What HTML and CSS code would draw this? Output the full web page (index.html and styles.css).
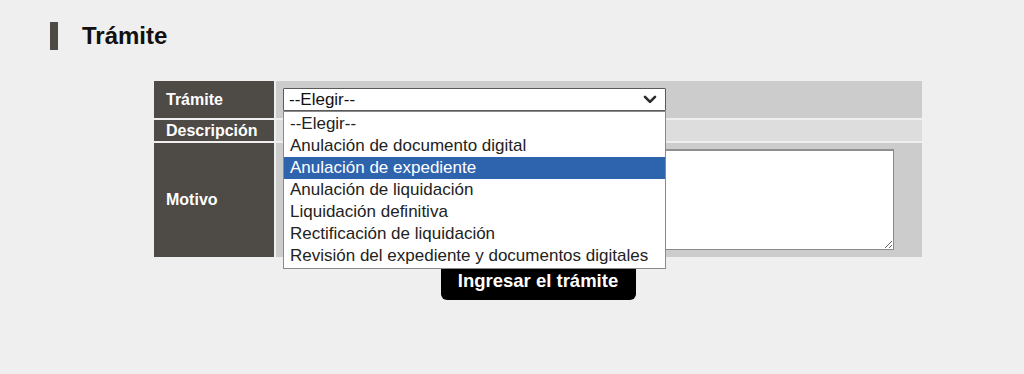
FILE: index.html
```html
<!DOCTYPE html>
<html lang="es">
<head>
<meta charset="utf-8">
<title>Trámite</title>
<link rel="stylesheet" href="styles.css">
</head>
<body>
<div class="page">
  <h1 class="title"><span class="bar"></span><span>Trámite</span></h1>
  <form class="form">
    <div class="grid">
      <div class="label">Trámite</div>
      <div class="value dark">
        <div class="select-wrap">
          <div class="select">
            <span>--Elegir--</span>
            <svg class="chev" width="14" height="9" viewBox="0 0 14 9"><path d="M2 1.8 L7 6.8 L12 1.8" fill="none" stroke="#2b2b2b" stroke-width="2.6" stroke-linecap="round" stroke-linejoin="round"/></svg>
          </div>
          <ul class="listbox">
            <li>--Elegir--</li>
            <li>Anulación de documento digital</li>
            <li class="sel">Anulación de expediente</li>
            <li>Anulación de liquidación</li>
            <li>Liquidación definitiva</li>
            <li>Rectificación de liquidación</li>
            <li>Revisión del expediente y documentos digitales</li>
          </ul>
        </div>
      </div>
      <div class="label">Descripción</div>
      <div class="value light"></div>
      <div class="label">Motivo</div>
      <div class="value dark motivo-cell">
        <textarea class="motivo"></textarea>
      </div>
    </div>
    <div class="actions">
      <button type="button" class="btn">Ingresar el trámite</button>
    </div>
  </form>
</div>
</body>
</html>
```

FILE: styles.css
```css
* { box-sizing: border-box; }
html, body {
  margin: 0;
  padding: 0;
  background: #efefef;
  font-family: "Liberation Sans", Arial, sans-serif;
}
.page {
  width: 1024px;
  height: 374px;
  padding: 22px 0 0 50px;
}
.title {
  margin: 0;
  display: flex;
  align-items: center;
  gap: 24px;
  height: 28px;
  font-size: 24px;
  font-weight: bold;
  color: #111;
}
.bar {
  display: block;
  width: 8px;
  height: 28px;
  background: #4e4a46;
}
.form {
  margin: 31px 0 0 104px;
  width: 768px;
}
.grid {
  display: grid;
  grid-template-columns: 120px 646px;
  grid-template-rows: 37px 21px 114px;
  gap: 2px;
}
.label {
  background: #4e4a46;
  color: #fff;
  font-weight: bold;
  font-size: 16px;
  display: flex;
  align-items: center;
  padding-left: 12px;
}
.value.dark { background: #cccccc; }
.value.light { background: #dddddd; }
.value {
  padding-left: 7px;
}
.select-wrap {
  position: relative;
  margin-top: 7px;
  width: 383px;
}
.select {
  height: 23px;
  background: #fff;
  border: 1px solid #5a5a5a;
  border-radius: 1px;
  display: flex;
  align-items: center;
  justify-content: space-between;
  padding: 0 8px 0 5px;
  font-size: 17px;
  color: #111;
}
.chev { display: block; }
.listbox {
  position: absolute;
  top: 23px;
  left: 0;
  width: 383px;
  margin: 0;
  padding: 1px 0;
  list-style: none;
  background: #fff;
  border: 1px solid #8a8a8a;
  z-index: 10;
}
.listbox li {
  height: 22px;
  line-height: 22px;
  padding-left: 6px;
  font-size: 17px;
  color: #222;
  white-space: nowrap;
}
.listbox li.sel {
  background: #2e63ae;
  color: #fff;
}
.motivo-cell {
  padding-top: 6px;
}
.motivo {
  display: block;
  width: 611px;
  height: 101px;
  margin: 0;
  border: 1px solid #8a8a8a;
  border-top: 2px solid #8f8f8f;
  background: #fff;
  resize: both;
}
.actions {
  display: flex;
  justify-content: center;
  margin-top: 5px;
}
.btn {
  width: 195px;
  height: 38px;
  background: #000;
  color: #fff;
  border: none;
  border-radius: 6px;
  font-family: "Liberation Sans", Arial, sans-serif;
  font-weight: bold;
  font-size: 18.5px;
  padding: 0;
}
```
